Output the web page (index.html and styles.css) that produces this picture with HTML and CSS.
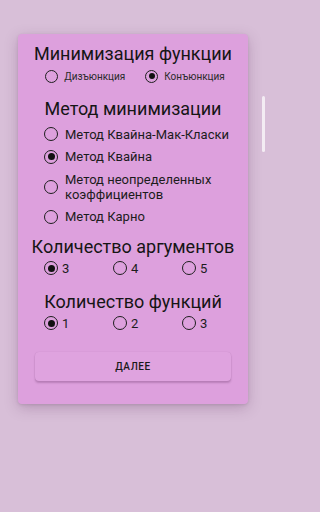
FILE: index.html
```html
<!DOCTYPE html>
<html lang="ru">
<head>
<meta charset="utf-8">
<link rel="stylesheet" href="styles.css">
</head>
<body>
<div class="card">
  <div class="heading h1">Минимизация функции</div>
  <div class="row-top">
    <div class="opt small"><span class="radio"></span><span>Дизъюнкция</span></div>
    <div class="opt small"><span class="radio checked"></span><span>Конъюнкция</span></div>
  </div>
  <div class="heading h2">Метод минимизации</div>
  <div class="list">
    <div class="opt item"><span class="radio"></span><span>Метод Квайна-Мак-Класки</span></div>
    <div class="opt item"><span class="radio checked"></span><span>Метод Квайна</span></div>
    <div class="opt item"><span class="radio"></span><span>Метод неопределенных<br>коэффициентов</span></div>
    <div class="opt item"><span class="radio"></span><span>Метод Карно</span></div>
  </div>
  <div class="heading h3">Количество аргументов</div>
  <div class="cols">
    <div class="opt item"><span class="radio checked"></span><span>3</span></div>
    <div class="opt item"><span class="radio"></span><span>4</span></div>
    <div class="opt item"><span class="radio"></span><span>5</span></div>
  </div>
  <div class="heading h4">Количество функций</div>
  <div class="cols">
    <div class="opt item"><span class="radio checked"></span><span>1</span></div>
    <div class="opt item"><span class="radio"></span><span>2</span></div>
    <div class="opt item"><span class="radio"></span><span>3</span></div>
  </div>
  <div class="btn">ДАЛЕЕ</div>
</div>
<div class="scroll-ind"></div>
</body>
</html>
```
FILE: styles.css
```css
html, body {
  margin: 0;
  padding: 0;
}
body {
  background: #d8bfd8;
  font-family: Roboto, "Noto Sans", sans-serif;
  color: #1c1c1c;
  min-height: 512px;
  position: relative;
}
.card {
  margin: 34px 0 0 18px;
  width: 230px;
  height: 370px;
  box-sizing: border-box;
  background: #dda0dd;
  border-radius: 4px;
  box-shadow: 0 4px 14px rgba(90, 40, 90, 0.26), 0 1px 3px rgba(0,0,0,0.10);
  padding-top: 9px;
  display: flex;
  flex-direction: column;
}
.heading {
  font-size: 18px;
  line-height: 21px;
  text-align: center;
  color: #151515;
}
.h2 { margin-top: 10px; }
.h3 { margin-top: 8px; }
.h4 { margin-top: 11px; }
.row-top {
  height: 24px;
  display: flex;
  justify-content: center;
  gap: 20px;
  padding-left: 4px;
}
.opt {
  display: flex;
  align-items: center;
}
.small {
  font-size: 10px;
  color: #2a2a2a;
  gap: 6px;
}
.radio {
  flex: none;
  width: 13px;
  height: 13px;
  box-sizing: border-box;
  border: 1.8px solid #1e1e1e;
  border-radius: 50%;
  display: flex;
  align-items: center;
  justify-content: center;
}
.radio.checked::after {
  content: "";
  width: 6px;
  height: 6px;
  border-radius: 50%;
  background: #111;
}
.item .radio {
  width: 14px;
  height: 14px;
}
.item .radio.checked::after {
  width: 7px;
  height: 7px;
}
.list {
  margin-top: 3.75px;
  padding-left: 26px;
}
.item {
  font-size: 13px;
  line-height: 15px;
  padding: 3.75px 0;
  gap: 7px;
  color: #1c1c1c;
}
.cols {
  display: grid;
  grid-template-columns: 69px 69px 69px;
  padding-left: 26px;
}
.cols .item {
  gap: 4px;
  padding: 4px 0;
}
.btn {
  margin: 17.5px 17px 0 17px;
  height: 29px;
  border-radius: 4px;
  background: #dfa3df;
  box-shadow: 0 2px 2px rgba(80, 30, 80, 0.25), 0 0 1px rgba(80,30,80,0.2);
  display: flex;
  align-items: center;
  justify-content: center;
  font-size: 10px;
  font-weight: 500;
  letter-spacing: 0.6px;
  color: #1a1a1a;
}
.scroll-ind {
  position: absolute;
  left: 262px;
  top: 96px;
  width: 3px;
  height: 56px;
  border-radius: 2px;
  background: rgba(255, 255, 255, 0.7);
}
```
